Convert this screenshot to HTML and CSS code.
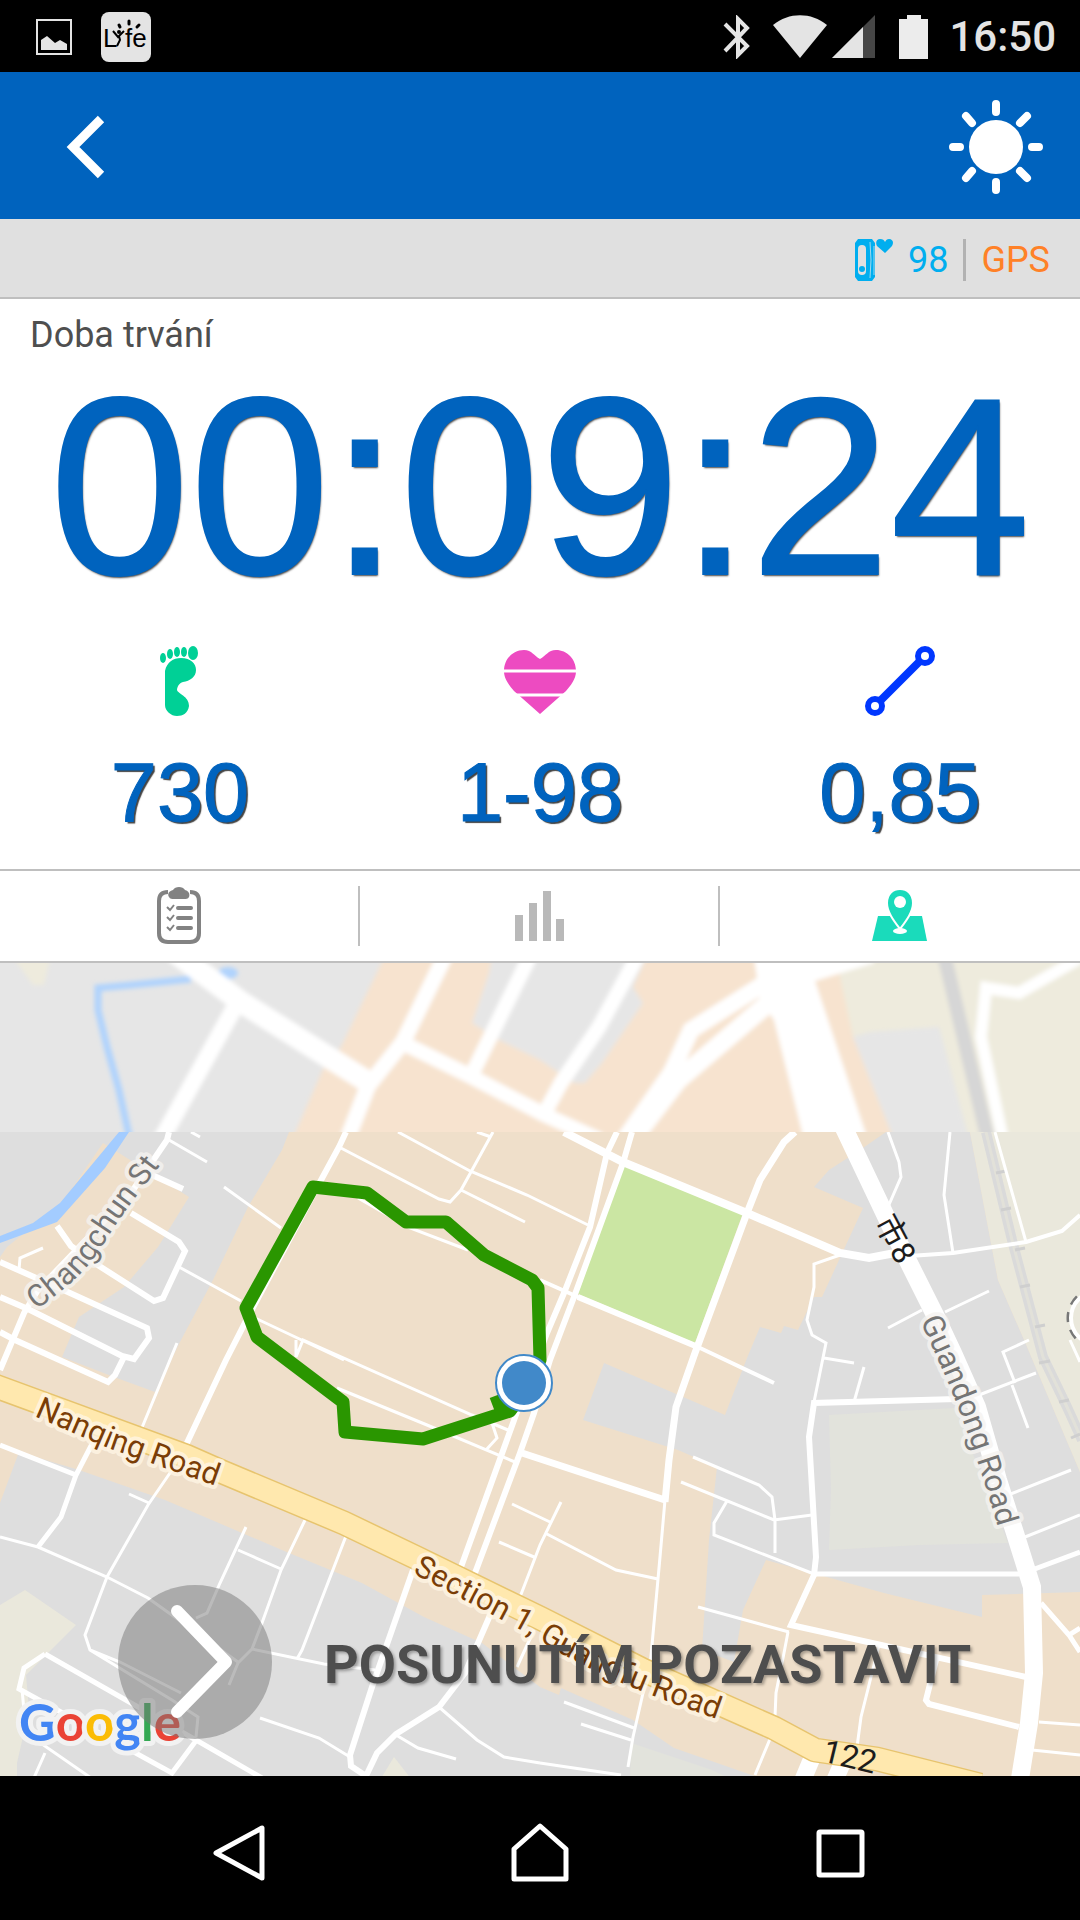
FILE: index.html
```html
<!DOCTYPE html>
<html lang="cs">
<head>
  <meta charset="UTF-8" />
  <meta name="viewport" content="width=device-width, initial-scale=1.0"/>
  <title>Trénink</title>
  <link rel="stylesheet" href="styles.css">
</head>
<body>
  <div class="status-bar">
    <div class="status-group">
      <svg class="status-picture" width="36" height="36" viewBox="0 0 36 36">
        <path d="M1 1H35V35H1Z" fill="none" stroke="#e4e4e4" stroke-width="2"/>
        <path d="M5 31V21L11 17L19 24L24 21L31 25V31Z" fill="#e4e4e4"/>
      </svg>
      <svg width="50" height="50" viewBox="0 0 50 50">
        <rect width="50" height="50" rx="8" fill="#e4e4e4"/>
        <text class="lyfe" x="2" y="35">L</text>
        <text class="lyfe" x="24" y="35">fe</text>
        <path d="M12 19L17 25L23 19M18 24L19 28L16 34" fill="none" stroke="#000" stroke-width="2"/>
        <circle cx="18" cy="20" r="2"/>
        <path d="M18 13L19 15M28 9V12M38 13L36 15" stroke="#000" stroke-width="3" stroke-linecap="round"/>
      </svg>
    </div>
    <div class="status-group status-right">
      <svg class="status-bluetooth" width="28" height="44" viewBox="0 0 28 44">
        <path d="M2 9L24 31L15 40V4L24 13L2 36" fill="none" stroke="#e4e4e4" stroke-width="4"/>
      </svg>
      <svg width="54" height="44" viewBox="0 0 54 44">
        <path d="M0 10C16 -3 38 -3 54 10L27 43Z" fill="#e4e4e4"/>
      </svg>
      <svg width="43" height="44" viewBox="0 0 43 44">
        <path d="M43 0V43H0Z" fill="#464646"/>
        <path d="M31 12V43H0Z" fill="#e4e4e4"/>
      </svg>
      <svg class="status-battery" width="29" height="44" viewBox="0 0 29 44">
        <path d="M8 0H22V4H29V44H0V4H8Z" fill="#ececec"/>
      </svg>
      <span class="clock">16:50</span>
    </div>
  </div>

  <header class="app-bar">
    <button class="icon-button" aria-label="Zpět">
      <svg width="40" height="64" viewBox="0 0 40 64">
        <path d="M35 4L7 32L35 60" fill="none" stroke="#fff" stroke-width="9"/>
      </svg>
    </button>
    <button class="icon-button" aria-label="Jas">
      <svg width="96" height="96" viewBox="0 0 96 96">
        <circle cx="48" cy="48" r="27" fill="#fff"/>
        <path d="M48 5V13M48 83V91M5 48H12M84 48H91M18 17L24 24M72 24L79 17M18 79L24 72M72 72L79 79" stroke="#fff" stroke-width="8" stroke-linecap="round"/>
      </svg>
    </button>
  </header>

  <div class="sensor-bar">
    <svg class="sensor-band" width="38" height="42" viewBox="0 0 38 42">
      <path d="M3 0H17L20 4V38L17 42H3L0 38V4Z" fill="#00aeef"/>
      <rect x="3" y="6" width="8" height="30" rx="4" fill="#e0e0e0"/>
      <circle cx="7" cy="30" r="3" fill="#00aeef"/>
      <path d="M15 3Q17 21 15 39M19 7V36" fill="none" stroke="#9fd9ee" stroke-width="1"/>
      <path d="M30 14L22 7C20 3 22 0 25 0C28 0 29 1 30 3C31 1 32 0 34 0C38 0 39 4 37 7Z" fill="#00aeef"/>
    </svg>
    <span class="sensor-pulse">98</span>
    <span class="sensor-gps">GPS</span>
  </div>

  <main>
    <section class="summary">
      <div class="duration-label">Doba trvání</div>
      <div class="duration">00:09:24</div>
      <div class="stats">
        <div class="stat">
          <svg width="72" height="72" viewBox="0 0 72 72">
            <g fill="#00d096">
              <path d="M21 26C23 17 29 13 37 13C47 13 52 19 52 25C52 32 46 36 39 37C35 38 33 42 33 45C34 49 45 51 45 61C44 68 39 71 33 71C27 71 21 66 21 60Z"/>
              <ellipse cx="19" cy="13" rx="3" ry="5"/>
              <ellipse cx="26" cy="9" rx="3" ry="5"/>
              <ellipse cx="33" cy="7" rx="3" ry="5"/>
              <ellipse cx="40" cy="7" rx="3" ry="5"/>
              <ellipse cx="49" cy="8" rx="5" ry="7"/>
            </g>
          </svg>
          <div class="stat-value">730</div>
        </div>
        <div class="stat">
          <svg width="72" height="72" viewBox="0 0 72 72">
            <path d="M36 69L10 46C5 40 0 34 0 26C0 14 9 5 20 5C28 5 30 11 36 14C42 11 44 5 52 5C63 5 72 14 72 26C72 34 67 40 62 46Z" fill="#ed4bc1"/>
            <path d="M0 26H72M0 50H72" stroke="#fff" stroke-width="3"/>
          </svg>
          <div class="stat-value">1-98</div>
        </div>
        <div class="stat">
          <svg width="72" height="72" viewBox="0 0 72 72">
            <g fill="none" stroke="#0037ff" stroke-width="6">
              <circle cx="11" cy="61" r="7"/>
              <circle cx="61" cy="11" r="7"/>
              <path d="M16 56L56 16" stroke-width="8"/>
            </g>
          </svg>
          <div class="stat-value">0,85</div>
        </div>
      </div>
    </section>

    <nav class="tabs">
      <button class="tab" aria-label="Přehled">
        <svg width="44" height="58" viewBox="0 0 44 58">
          <path d="M11 5C5 5 2 8 2 14V46C2 52 5 55 11 55H33C39 55 42 52 42 46V14C42 8 39 5 33 5" fill="none" stroke="#828282" stroke-width="4"/>
          <path d="M16 3C18 -1 26 -1 28 3C32 4 33 7 32 10C31 12 29 12 27 12H17C15 12 13 12 12 10C10 7 12 4 16 3Z" fill="#828282"/>
          <path d="M21 21H34M21 31H34M21 41H34" stroke="#828282" stroke-width="4" stroke-linecap="round"/>
          <path d="M10 20L13 23L17 18M10 30L13 33L17 28M10 40L13 43L17 38" fill="none" stroke="#828282" stroke-width="2"/>
        </svg>
      </button>
      <button class="tab" aria-label="Grafy">
        <svg width="50" height="58" viewBox="0 0 50 58">
          <path d="M1 28H9V54H1ZM15 16H23V54H15ZM29 4H37V54H29ZM42 32H50V54H42Z" fill="#b9b9b9"/>
        </svg>
      </button>
      <button class="tab" aria-label="Mapa">
        <svg width="56" height="58" viewBox="0 0 56 58">
          <path d="M6 29H50L55 54H0Z" fill="#1adbbb"/>
          <path d="M28 42C22 34 15 25 15 16C15 7 21 2 28 2C35 2 41 7 41 16C41 25 34 34 28 42Z" fill="#1adbbb" stroke="#fff" stroke-width="2"/>
          <circle cx="28" cy="15" r="6" fill="#fff"/>
          <ellipse cx="28" cy="44" rx="7" ry="3" fill="#fff"/>
        </svg>
      </button>
    </nav>

    <section class="map">
      <svg class="map-canvas" viewBox="0 963 1080 813">
        <defs>
          <filter id="soft" x="-5%" y="-5%" width="110%" height="110%"><feGaussianBlur stdDeviation="2"/></filter>
          <clipPath id="old-tiles"><rect x="0" y="963" width="1080" height="169"/></clipPath>
          <clipPath id="new-tiles"><rect x="0" y="1132" width="1080" height="648"/></clipPath>
          <path id="changchun" d="M36 1310C72 1284 88 1270 108 1237C128 1206 140 1192 158 1168L180 1138"/>
          <path id="nanqing" d="M34 1416L108 1448L250 1498"/>
          <path id="section" d="M412 1573C475 1606 520 1628 562 1654C610 1680 660 1700 760 1734"/>
          <path id="guandong" d="M920 1321C949 1382 976 1442 1013 1582"/>
          <path id="route-122" d="M821 1761L920 1785"/>
        </defs>

        <!-- tiles still loading -->
        <g clip-path="url(#old-tiles)">
          <rect x="0" y="963" width="1080" height="170" fill="#e6e6e6"/>
          <g filter="url(#soft)">
            <path d="M8 950H52L44 985H33Z" fill="#eeebdd"/>
            <path d="M388 950L365 997L341 1047L324 1067L292 1140H900L853 1037L840 950Z" fill="#f7e3cf"/>
            <path d="M493 950L489 973L472 1023L499 1040L540 1060L574 1083H585L602 1063L643 1003L633 987L650 950Z" fill="#e6e6e6"/>
            <path d="M840 950V977L853 1037L871 1032L939 1027L969 1140H1090V950Z" fill="#eeebdd"/>
            <path d="M853 1037L871 1032L939 1027L969 1140H894Z" fill="#e6e6e6"/>
            <path d="M191 979L131 985L98 988V1010L107 1047L119 1090L130 1140" fill="none" stroke="#b0d3fd" stroke-width="7"/>
            <ellipse cx="228" cy="973" rx="10" ry="6" fill="#b0d3fd"/>
            <path d="M943 950L988 1140" stroke="#d6d6d6" stroke-width="14"/>
            <path d="M753 950H874V963L815 981L868 1140H804L774 1020L760 1000Z" fill="#fff"/>
            <g fill="none" stroke="#fff">
              <path d="M165 945L241 1002L368 1082" stroke-width="22"/>
              <path d="M237 1003L161 1140" stroke-width="17"/>
              <path d="M448 950L403 1042L368 1086L347 1140" stroke-width="16"/>
              <path d="M403 1043L472 1077L543 1114L600 1140M533 950L472 1074M641 950L599 1027L561 1083L543 1116" stroke-width="15"/>
              <path d="M624 1140L671 1073L691 1030L762 985" stroke-width="17"/>
              <path d="M632 1140L678 1080L766 1005" stroke-width="19"/>
              <path d="M1080 958L1019 993L986 988L981 1037L1003 1140" stroke-width="12"/>
            </g>
          </g>
        </g>

        <g clip-path="url(#new-tiles)">
          <rect x="0" y="1132" width="1080" height="648" fill="#efdfca"/>
          <g fill="#dedede">
            <path d="M0 1132H289L282 1150L248 1207L213 1280L181 1340L155 1392L114 1377L62 1357L79 1317L124 1287L158 1247L189 1197L103 1143L62 1203L7 1247L0 1257Z"/>
            <path d="M0 1503L19 1452L79 1470L165 1500L289 1553L362 1583L424 1617L482 1643L540 1687L559 1695L561 1688L633 1720L674 1748L766 1780H0Z"/>
            <path d="M886 1132L860 1150L829 1170L814 1187L863 1208L822 1297H814L798 1330L784 1326L781 1333L760 1327L747 1358L725 1415L604 1363L583 1420L678 1450L717 1467L709 1540L702 1650L734 1662L743 1610L766 1560L884 1593L982 1617V1595L1080 1592V1472L1025 1342L998 1280L970 1132Z"/>
          </g>
          <path d="M119 1132H129L105 1168L57 1222L0 1243V1236L33 1223L60 1203Z" fill="#a3ccff"/>
          <g fill="#eae8dc">
            <path d="M970 1132L998 1280L1025 1342L1080 1472V1132Z"/>
            <path d="M0 1605L25 1590L76 1625L26 1675L29 1710L17 1763V1780H0Z"/>
            <path d="M394 1757L380 1780H412Z"/>
          </g>
          <path d="M829 1415L955 1408L1008 1543L919 1545L829 1550L831 1490ZM631 1743L712 1770L733 1780H630Z" fill="#e2e3dc"/>
          <path d="M624 1163L743 1213L695 1343L578 1294Z" fill="#cbe6a3"/>

          <g fill="none" stroke="#dadada">
            <path d="M986 1132L1012 1240L1043 1357L1067 1407L1082 1440" stroke-width="10"/>
            <path d="M986 1132L1012 1240L1043 1357L1067 1407L1082 1440" stroke="#e2e1d9" stroke-width="3"/>
            <path d="M996 1173L1006 1171M1001 1210L1011 1208M1015 1250L1025 1248M1020 1287L1030 1285M1035 1327L1045 1325M1039 1363L1050 1361M1059 1402L1069 1400M1071 1438L1080 1434" stroke="#cfcfcf" stroke-width="3"/>
          </g>
          <circle cx="1098" cy="1318" r="30" fill="none" stroke="#777" stroke-width="3" stroke-dasharray="10 8"/>
          <circle cx="1098" cy="1318" r="27" fill="none" stroke="#fff" stroke-width="4"/>

          <!-- lanes -->
          <g fill="none" stroke="#fff" stroke-width="3">
            <path d="M169 1140L207 1162M191 1132L200 1137M224 1187L281 1228M179 1267L241 1301M19 1270L20 1258L43 1248M177 1343L141 1430"/>
            <path d="M339 1147L439 1199L450 1202L461 1190L493 1132M477 1132L491 1137M398 1132L470 1171L527 1195L588 1225M461 1190L525 1222M358 1198L410 1228L468 1250"/>
            <path d="M255 1318L344 1360M296 1340V1357L303 1340L472 1415L508 1430M337 1388L427 1425L515 1462M492 1423L497 1438L486 1450"/>
            <path d="M665 1500L660 1557L650 1667L643 1693L633 1737L628 1767"/>
            <path d="M840 1255L814 1264V1287L807 1320L812 1335L826 1343L814 1402M824 1358L854 1363M864 1367L854 1402"/>
            <path d="M888 1132L899 1162L901 1177L888 1207M950 1132L944 1195L953 1253M995 1132L1026 1242M888 1328L922 1310M945 1312L989 1291"/>
            <path d="M788 1632L784 1653L776 1693L775 1717M1020 1539L1080 1515M1008 1495L1071 1470M979 1395L1036 1373M1029 1340L1003 1352L1015 1383M1012 1385L1028 1428M1070 1340L1080 1362"/>
            <path d="M693 1457L759 1485L772 1497L775 1520V1553M681 1482L774 1520L812 1515M727 1501L714 1523V1535L814 1574"/>
            <path d="M561 1502L540 1545L520 1597M545 1533L616 1570L658 1579M512 1504L550 1522M499 1542L534 1557M698 1607L789 1632M879 1645L871 1677L861 1717L857 1747"/>
            <path d="M1039 1722L1080 1725M1032 1750L1080 1755M564 1702L634 1728M581 1724L631 1740M540 1763L621 1775M770 1739L755 1775M534 1630L517 1667"/>
            <path d="M172 1470L148 1505L107 1577L85 1635L90 1650L172 1700L198 1717L196 1737M90 1650L120 1662L181 1693M0 1537L38 1547L107 1577L148 1598L169 1613L238 1662M129 1494L149 1503"/>
            <path d="M246 1527L220 1583L207 1613L196 1618M238 1550L281 1569M306 1518L281 1570L262 1623L252 1649L238 1663L229 1685M346 1536L302 1650L297 1659M252 1649L324 1664L375 1670"/>
            <path d="M439 1707L477 1740L504 1757L540 1763M396 1735L418 1748L456 1759M260 1718L319 1738L350 1757M45 1753L33 1780M22 1689L26 1733L94 1780"/>
          </g>
          <!-- streets -->
          <g fill="none" stroke="#fff" stroke-width="6">
            <path d="M169 1132L167 1140L131 1193L38 1290L24 1313L0 1370M131 1213L179 1242L185 1251L163 1298L154 1301L93 1262L71 1246L57 1226M152 1175L183 1189"/>
            <path d="M0 1262L59 1288L147 1328L149 1338L134 1359L122 1356L28 1309L0 1297M0 1332L15 1340L108 1382L115 1375L124 1357"/>
            <path d="M346 1132L339 1147L320 1182L250 1313L226 1360L186 1445"/>
            <path d="M617 1132L607 1153L590 1227L564 1293L547 1333L517 1412L461 1567M632 1132L623 1163L574 1297L550 1360L534 1413L520 1453L475 1573"/>
            <path d="M564 1132L623 1162L747 1213L840 1253L869 1258L895 1253" stroke-width="8"/>
            <path d="M795 1132L784 1142L760 1180L747 1213L695 1353L676 1407L669 1460L665 1502M522 1453L665 1500" stroke-width="7"/>
            <path d="M895 1257L953 1253L1026 1242L1062 1231L1080 1215M540 1280L578 1297L698 1347L774 1383" stroke-width="4"/>
            <path d="M578 1297L698 1347M957 1399L814 1403L809 1437L816 1557L814 1575L791 1625L1026 1677M936 1660L926 1700L929 1704L1019 1727"/>
            <path d="M815 1574H1019M1032 1570L1080 1552M1041 1603L1069 1635L1080 1652M1069 1635L1080 1628" stroke-width="5"/>
            <path d="M0 1445L76 1475M93 1442L76 1475L61 1517L38 1547M45 1654L24 1668L19 1689L172 1773L195 1742M45 1654L196 1740L262 1778" stroke-width="5"/>
            <path d="M413 1570L372 1687L350 1755L351 1766L366 1776L377 1753L396 1734L439 1707L465 1673L491 1613"/>
          </g>
          <path d="M812 1758L802 1782M842 1764L834 1782" stroke="#fff" stroke-width="17"/>
          <path d="M843 1126L891 1227L936 1317L953 1353L977 1407L998 1480L1015 1533L1032 1587L1034 1673L1029 1723L1019 1785" fill="none" stroke="#fff" stroke-width="18"/>
          <!-- main road -->
          <g fill="none" stroke-linejoin="round">
            <path d="M-5 1386L186 1456L220 1471L344 1523L417 1558L540 1618L643 1670L774 1728L815 1750L877 1759L980 1785" stroke="#e7c46e" stroke-width="25"/>
            <path d="M-5 1386L186 1456L220 1471L344 1523L417 1558L540 1618L643 1670L774 1728L815 1750L877 1759L980 1785" stroke="#ffe8ae" stroke-width="22"/>
          </g>

          <g class="street-names">
            <text class="minor"><textPath href="#changchun">Changchun St</textPath></text>
            <text class="major"><textPath href="#nanqing">Nanqing Road</textPath></text>
            <text class="major"><textPath href="#section">Section 1, Guangfu Road</textPath></text>
            <text class="minor"><textPath href="#guandong">Guandong Road</textPath></text>
            <text class="shield" transform="translate(874 1222) rotate(62)">市8</text>
            <text class="shield"><textPath href="#route-122">122</textPath></text>
          </g>
          <text class="google" x="19" y="1741"><tspan fill="#4285f4">G</tspan><tspan fill="#ea4335">o</tspan><tspan fill="#fbbc05">o</tspan><tspan fill="#4285f4">g</tspan><tspan fill="#34a853">l</tspan><tspan fill="#ea4335">e</tspan></text>

          <path d="M524 1385L540 1360L538 1288L532 1280L484 1255L446 1222H406L367 1193L313 1187L246 1308L257 1337L343 1402L345 1432L423 1439L510 1411L524 1392L492 1404" fill="none" stroke="#2a9600" stroke-width="13" stroke-linejoin="round"/>
          <circle cx="524" cy="1383" r="28" fill="#fff" stroke="#4189c9" stroke-width="2"/>
          <circle cx="524" cy="1383" r="22" fill="#4189c9"/>
        </g>
      </svg>

      <div class="pause-slider">
        <button class="pause-knob" aria-label="Pozastavit">
          <svg width="154" height="154" viewBox="0 0 154 154">
            <path d="M59 26L108 77L59 127" fill="none" stroke="#fff" stroke-width="12" stroke-linecap="round" stroke-linejoin="round"/>
          </svg>
        </button>
        <span class="pause-text">POSUNUTÍM POZASTAVIT</span>
      </div>
    </section>
  </main>

  <nav class="system-nav">
    <button aria-label="Zpět">
      <svg width="60" height="60" viewBox="0 0 60 60">
        <path d="M52 5V55L6 30Z" fill="none" stroke="#fff" stroke-width="5" stroke-linejoin="round"/>
      </svg>
    </button>
    <button aria-label="Domů">
      <svg width="60" height="60" viewBox="0 0 60 60">
        <path d="M4 56V26L30 3L56 26V56Z" fill="none" stroke="#fff" stroke-width="5" stroke-linejoin="round"/>
      </svg>
    </button>
    <button aria-label="Poslední aplikace">
      <svg width="60" height="60" viewBox="0 0 60 60">
        <rect x="9" y="9" width="43" height="43" rx="1" fill="none" stroke="#fff" stroke-width="5"/>
      </svg>
    </button>
  </nav>
</body>
</html>
```

FILE: styles.css
```css
* {
  box-sizing: border-box;
}

body {
  margin: 0;
  font-family: Roboto, "Noto Sans CJK TC", sans-serif;
  font-size: 36px;
  background-color: #fff;
}

button {
  border: none;
  padding: 0;
  background: none;
  cursor: pointer;
}

svg {
  display: block;
}

.status-bar {
  display: flex;
  justify-content: space-between;
  align-items: center;
  height: 72px;
  padding: 1px 24px 0 36px;
  background-color: #000;
  color: #e4e4e4;
}

.status-group {
  display: flex;
  align-items: center;
}

.status-picture {
  margin-right: 29px;
}

.lyfe {
  font-family: "Liberation Sans", sans-serif;
  font-size: 26px;
}

.status-bluetooth {
  margin-right: 22px;
}

.status-right svg + svg {
  margin-right: 5px;
}

.status-right .status-battery {
  margin: 0 21px 0 19px;
}

.clock {
  font-size: 42px;
  font-weight: 500;
}

.app-bar {
  display: flex;
  justify-content: space-between;
  align-items: center;
  height: 147px;
  padding: 2px 36px 0 66px;
  background-color: #0063be;
}

.sensor-bar {
  display: flex;
  justify-content: flex-end;
  align-items: center;
  height: 80px;
  padding: 3px 30px 0;
  background-color: #e0e0e0;
  border-bottom: 2px solid #bfbfbf;
  line-height: 42px;
}

.sensor-band {
  margin-right: 15px;
}

.sensor-pulse {
  padding-right: 15px;
  border-right: 3px solid #b2b2b2;
  color: #00aeef;
}

.sensor-gps {
  padding-left: 15px;
  color: #ff8127;
}

.summary {
  padding: 15px 0 34px;
}

.duration-label {
  padding-left: 30px;
  line-height: 42px;
  color: #4f4f4f;
}

.duration {
  margin-top: 1px;
  font-family: "Liberation Sans", sans-serif;
  font-size: 252px;
  line-height: 260px;
  text-align: center;
  white-space: nowrap;
  color: #0063be;
  -webkit-text-stroke: 2px #0063be;
  text-shadow: 1px 2px 2px #444;
}

.stats {
  display: grid;
  grid-template-columns: repeat(3, 1fr);
  margin-top: 28px;
}

.stat {
  display: flex;
  flex-direction: column;
  align-items: center;
  gap: 34px;
}

.stat-value {
  font-family: "Liberation Sans", sans-serif;
  font-size: 83px;
  line-height: 84px;
  color: #0063be;
  -webkit-text-stroke: 1px #0063be;
  text-shadow: 2px 2px 1px #444;
}

.tabs {
  display: grid;
  grid-template-columns: repeat(3, 1fr);
  height: 94px;
  padding: 15px 0;
  border-top: 2px solid #bfbfbf;
  border-bottom: 2px solid #bfbfbf;
}

.tab {
  display: flex;
  justify-content: center;
  align-items: center;
  border-right: 2px solid #bfbfbf;
}

.tab:last-child {
  border-right: none;
}

.map {
  position: relative;
  overflow: hidden;
}

.map-canvas {
  width: 100%;
  height: auto;
}

.street-names text {
  font-size: 31px;
  stroke-width: 8px;
  stroke-linejoin: round;
  paint-order: stroke;
}

.street-names .minor {
  fill: #757575;
  stroke: rgba(245, 243, 240, 0.8);
}

.street-names .major {
  fill: #7a3d06;
  stroke: rgba(255, 246, 228, 0.8);
}

.street-names .shield {
  font-size: 32px;
  fill: #1c1c1c;
}

.google {
  font-family: Lato, sans-serif;
  font-size: 51px;
  font-weight: bold;
  stroke: #f2f2f2;
  stroke-width: 10px;
  stroke-linejoin: round;
  paint-order: stroke;
}

/* lies over the map */
.pause-slider {
  position: absolute;
  left: 118px;
  right: 24px;
  bottom: 37px;
  display: flex;
  align-items: center;
  gap: 52px;
}

.pause-knob {
  flex: none;
  border-radius: 50%;
  background-color: rgba(120, 120, 120, 0.5);
}

.pause-text {
  padding-top: 4px;
  font-size: 54px;
  font-weight: bold;
  white-space: nowrap;
  color: #4e4e4e;
  text-shadow: 2px 2px 3px rgba(0, 0, 0, 0.3);
}

.system-nav {
  display: flex;
  justify-content: center;
  align-items: center;
  gap: 240px;
  height: 144px;
  padding-top: 10px;
  background-color: #000;
}
```
